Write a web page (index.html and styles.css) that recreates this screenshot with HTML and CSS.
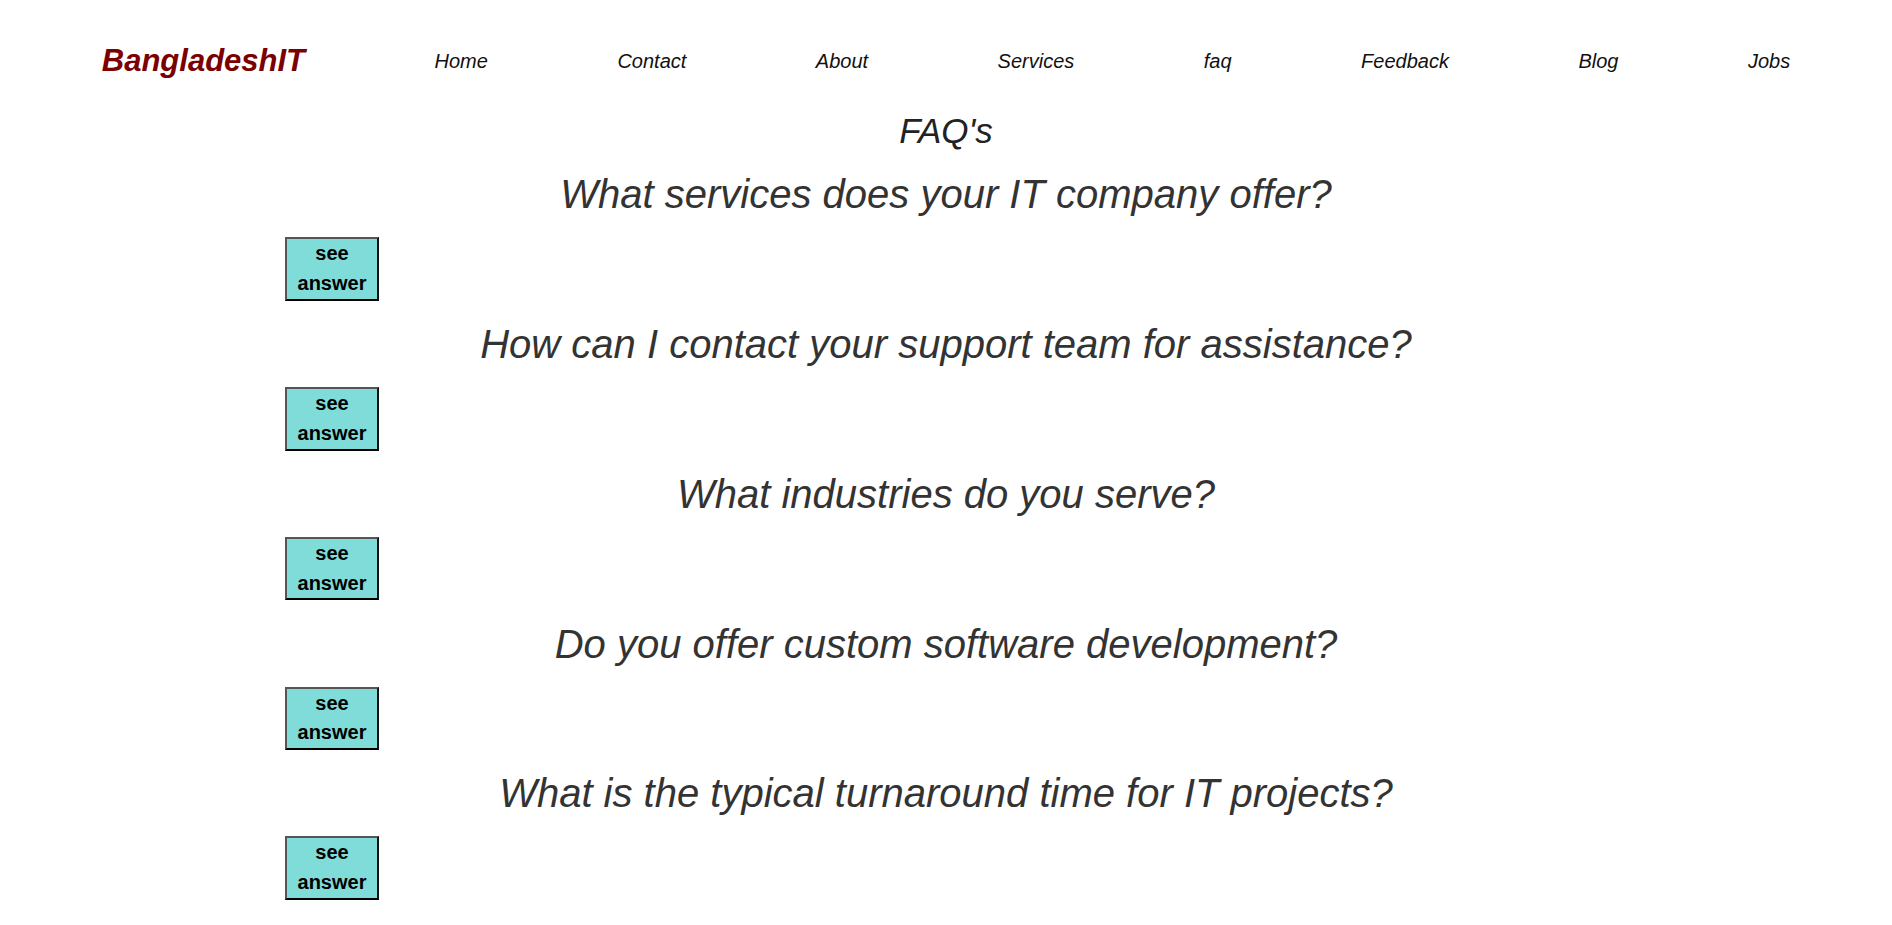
FILE: index.html
```html
<!DOCTYPE html>
<html lang="en">
<head>
<meta charset="utf-8">
<title>FAQ - BangladeshIT</title>
<link rel="stylesheet" href="styles.css">
</head>
<body>
<nav class="topbar">
  <a class="brand" href="#">BangladeshIT</a>
  <a class="navlink" href="#">Home</a>
  <a class="navlink" href="#">Contact</a>
  <a class="navlink" href="#">About</a>
  <a class="navlink" href="#">Services</a>
  <a class="navlink" href="#">faq</a>
  <a class="navlink" href="#">Feedback</a>
  <a class="navlink" href="#">Blog</a>
  <a class="navlink" href="#">Jobs</a>
</nav>
<main class="faq">
  <h1 class="faq-title">FAQ's</h1>
  <h2 class="question">What services does your IT company offer?</h2>
  <button class="answer-btn" type="button">see answer</button>
  <h2 class="question">How can I contact your support team for assistance?</h2>
  <button class="answer-btn" type="button">see answer</button>
  <h2 class="question">What industries do you serve?</h2>
  <button class="answer-btn" type="button">see answer</button>
  <h2 class="question">Do you offer custom software development?</h2>
  <button class="answer-btn" type="button">see answer</button>
  <h2 class="question">What is the typical turnaround time for IT projects?</h2>
  <button class="answer-btn" type="button">see answer</button>
</main>
</body>
</html>
```

FILE: styles.css
```css
body {
  margin: 8px;
  background: #ffffff;
  font-family: "Liberation Sans", Arial, sans-serif;
}

.topbar {
  width: 90%;
  margin: 0 auto;
  padding: 35px 0 14px;
  display: flex;
  align-items: center;
  justify-content: space-between;
}

.brand {
  font-size: 31px;
  font-weight: bold;
  font-style: italic;
  color: #7b0000;
  text-decoration: none;
}

.navlink {
  font-size: 20px;
  font-style: italic;
  color: #111111;
  text-decoration: none;
}

.faq-title {
  margin: 18px 0 21.3px;
  font-size: 35px;
  font-weight: normal;
  font-style: italic;
  text-align: center;
  color: #222222;
}

.question {
  margin: 21.2px 0 20px;
  font-size: 40px;
  font-weight: normal;
  font-style: italic;
  text-align: center;
  color: #333333;
}

.answer-btn {
  display: block;
  box-sizing: border-box;
  width: 94px;
  margin: 0 0 0 277px;
  padding: 0;
  font-family: "Liberation Sans", Arial, sans-serif;
  font-size: 20px;
  font-weight: bold;
  line-height: 29.8px;
  color: #000000;
  background: #80dcd9;
  border-style: solid;
  border-width: 2px;
  border-color: #555555 #111111 #000000 #555555;
  text-align: center;
}
```
